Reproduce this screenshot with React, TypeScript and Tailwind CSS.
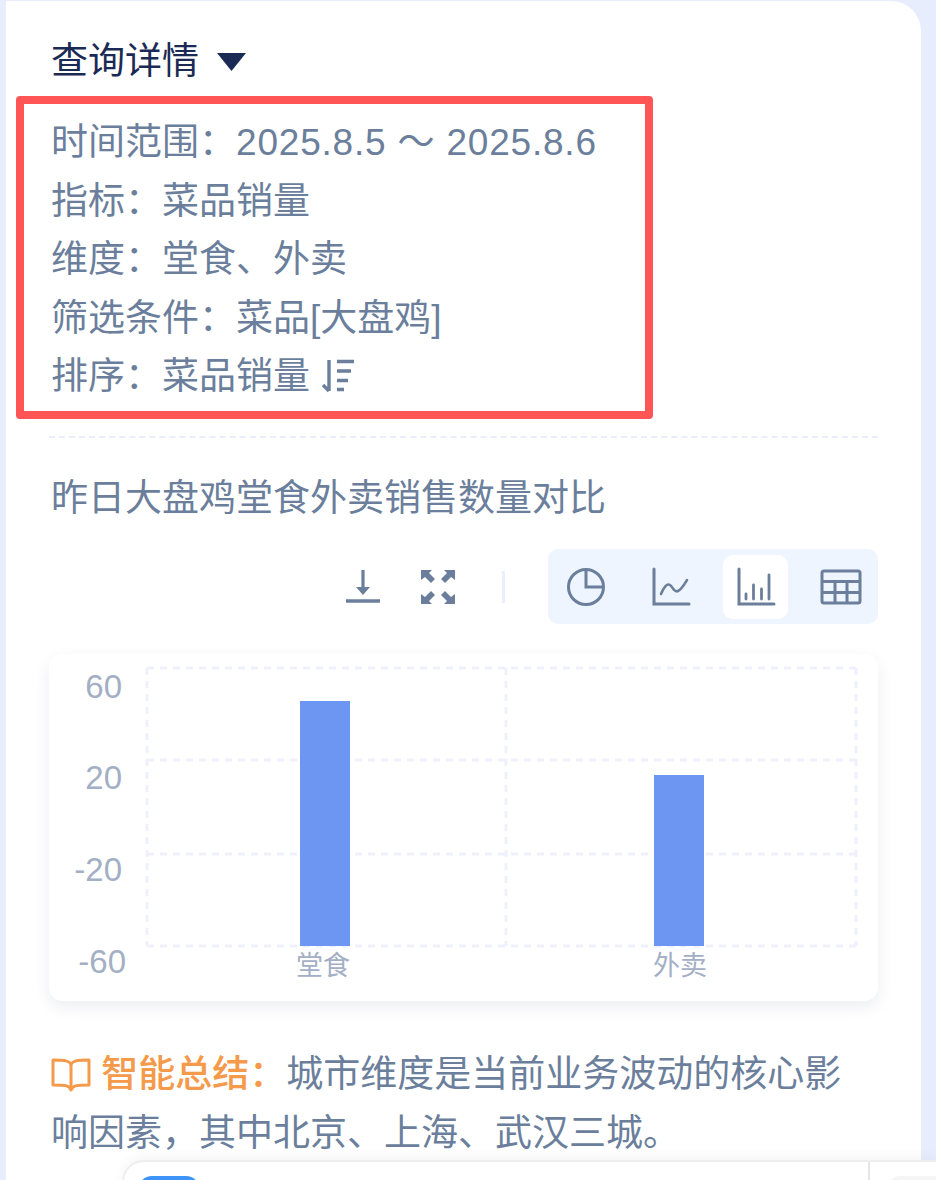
import React from 'react';

const chartLabelClass = "fill-[#a3afc4]";

const SortIcon = () => (
  <svg width="36" height="36" viewBox="0 0 36 36" fill="none" stroke="#6b7f9c" className="inline-block align-[-5px]">
    <path d="M9 2v31M3 27l6 6" strokeWidth="3.4" />
    <path d="M17 3.5h17M17 13h14M17 22.500h11M17 31.500h7" strokeWidth="3.4" />
  </svg>
);

const DownloadIcon = () => (
  <svg width="34" height="34" viewBox="0 0 34 34" fill="none">
    <path d="M17 0v19" stroke="#6b7f9c" strokeWidth="3.200" />
    <path d="M10 17h14l-7 8z" fill="#6b7f9c" />
    <path d="M0 31h34" stroke="#6b7f9c" strokeWidth="3.600" />
  </svg>
);

const ExpandIcon = () => (
  <svg width="34" height="34" viewBox="0 0 34 34" fill="#6b7f9c" stroke="none">
    <path d="M0 0h11l-3 3 6 6-4 4-6-6-4 3z" />
    <path d="M34 0H23l3 3-6 6 4 4 6-6 4 3z" />
    <path d="M0 34h11l-3-3 6-6-4-4-6 6-4-3z" />
    <path d="M34 34H23l3-3-6-6 4-4 6 6 4-3z" />
  </svg>
);

const PieIcon = () => (
  <svg width="40" height="40" viewBox="0 0 40 40" fill="none" stroke="#6b7f9c" strokeWidth="3">
    <circle cx="20" cy="20" r="17.500" />
    <path d="M20 3v17h17" />
  </svg>
);

const LineIcon = () => (
  <svg width="40" height="40" viewBox="0 0 40 40" fill="none" stroke="#6b7f9c" strokeWidth="3" strokeLinecap="round">
    <path d="M3 2v35h35" />
    <path d="M10 27c3-7 6-11 9-9s4 8 8 6 6-6 9-11" strokeWidth="2.600" />
  </svg>
);

const BarIcon = () => (
  <svg width="40" height="40" viewBox="0 0 40 40" fill="none" stroke="#6b7f9c" strokeWidth="3" strokeLinecap="round">
    <path d="M3 2v35h35" />
    <path d="M10 27v5M17.500 18v14M25.500 22v10M33 8v24" strokeWidth="2.800" />
  </svg>
);

const TableIcon = () => (
  <svg width="42" height="36" viewBox="0 0 42 36" fill="none" stroke="#6b7f9c" strokeWidth="3">
    <rect x="2" y="2" width="38" height="32" rx="2" />
    <path d="M2 12.500h38M2 23.500h38M15 12.500V34M27 12.500V34" />
  </svg>
);

const BookIcon = () => (
  <svg width="40" height="34" viewBox="0 0 40 34" fill="none" stroke="#f5994a" strokeWidth="3" strokeLinejoin="round" className="inline-block align-[-5px]">
    <path d="M20 6C18 3 15 2 2 2v25c12 0 16 0 18 5 2-5 6-5 18-5V2C25 2 22 3 20 6z" />
    <path d="M20 6v26" />
  </svg>
);

const Chart = () => (
  <svg width="829" height="347" viewBox="49 655 829 347" className="block font-['Liberation_Sans','Noto_Sans_CJK_SC',sans-serif]">
    <g stroke="#eef1fc" strokeWidth="3" strokeDasharray="7 6" fill="none">
      <path d="M147 669H856M147 761H856M147 855H856M147 947H856" />
      <path d="M147 669V947M506 669V947M856 669V947" />
    </g>
    <rect x="300" y="702" width="50" height="245" fill="#6d95f2" />
    <rect x="654" y="776" width="50" height="171" fill="#6d95f2" />
    <g fontSize="33" className={chartLabelClass} textAnchor="end">
      <text x="122" y="699">60</text>
      <text x="122" y="790">20</text>
      <text x="122" y="882">-20</text>
      <text x="126" y="974">-60</text>
    </g>
    <g fontSize="27" className={chartLabelClass} textAnchor="middle">
      <text x="323" y="976">堂食</text>
      <text x="680" y="976">外卖</text>
    </g>
  </svg>
);

export default function App() {
  return (
    <div className="relative h-[1180px] w-[936px] overflow-hidden bg-[#e8edfd] pt-px pl-[6px] font-['Liberation_Sans','Noto_Sans_CJK_SC',sans-serif] text-[37px] leading-[58.5px] text-[#6b7f9c]">
      <div className="h-[1179px] w-[915px] rounded-tr-[30px] bg-white">
        <div className="flex items-center gap-[18px] pt-[32px] pl-[45px] text-[#1b2a55]">
          <span className="leading-[58px]">查询详情</span>
          <svg width="29" height="18" viewBox="0 0 29 18" fill="#1b2a55">
            <path d="M0 0h29L14.500 18z" />
          </svg>
        </div>

        <div className="mt-[5px] ml-[10px] h-[323px] w-[637px] rounded-[4px] border-[8px] border-[#ff5555] pt-[10px] pl-[27px]">
          <div>
            时间范围：<span className="tracking-[0.8px]">2025.8.5 ～ 2025.8.6</span>
          </div>
          <div>指标：菜品销量</div>
          <div>维度：堂食、外卖</div>
          <div>筛选条件：菜品[大盘鸡]</div>
          <div>
            排序：菜品销量 <SortIcon />
          </div>
        </div>

        <div className="mx-[43px] mt-[17px] border-t-2 border-dashed border-[#e9edfa]" />

        <div className="mt-[32px] pl-[45px] leading-[58px]">昨日大盘鸡堂食外卖销售数量对比</div>

        <div className="mt-[21px] mr-[43px] flex h-[75px] items-center justify-end">
          <DownloadIcon />
          <div className="ml-[41px]">
            <ExpandIcon />
          </div>
          <div className="mr-[43px] ml-[47px] h-[32px] w-[3px] bg-[#e9effb]" />
          <div className="flex h-[75px] w-[330px] items-center rounded-[10px] bg-[#eef5fe] pl-[5px]">
            <div className="flex h-[64px] w-[65px] items-center justify-center">
              <PieIcon />
            </div>
            <div className="ml-[20px] flex h-[64px] w-[65px] items-center justify-center">
              <LineIcon />
            </div>
            <div className="flex h-[64px] w-[65px] ml-[20px] items-center justify-center rounded-[10px] bg-white">
              <BarIcon />
            </div>
            <div className="ml-[20px] flex h-[64px] w-[65px] items-center justify-center">
              <TableIcon />
            </div>
          </div>
        </div>

        <div className="mt-[30px] ml-[43px] w-[829px] rounded-[14px] bg-white shadow-[0_6px_16px_rgba(60,70,110,0.09)]">
          <Chart />
        </div>

        <div className="mt-[44px] w-[850px] pl-[45px] leading-[59px]">
          <BookIcon /> <span className="font-medium text-[#f5994a]">智能总结：</span>城市维度是当前业务波动的核心影响因素，其中北京、上海、武汉三城。
        </div>
      </div>

      <div className="absolute top-[1160px] left-[122px] flex h-[40px] w-[814px] rounded-tl-[22px] border-t-2 border-l-2 border-[#eeeeee] bg-white shadow-[0_-4px_12px_rgba(0,0,0,0.04)]">
        <div className="mt-[14px] ml-[14px] h-[30px] w-[62px] rounded-[14px] bg-[#3d93f8]" />
        <div className="ml-[668px] w-[2px] bg-[#e5e5e5]" />
        <div className="mt-[14px] ml-[18px] h-[30px] flex-1 rounded-tl-[12px] bg-[#f5f5f5]" />
      </div>
    </div>
  );
}
